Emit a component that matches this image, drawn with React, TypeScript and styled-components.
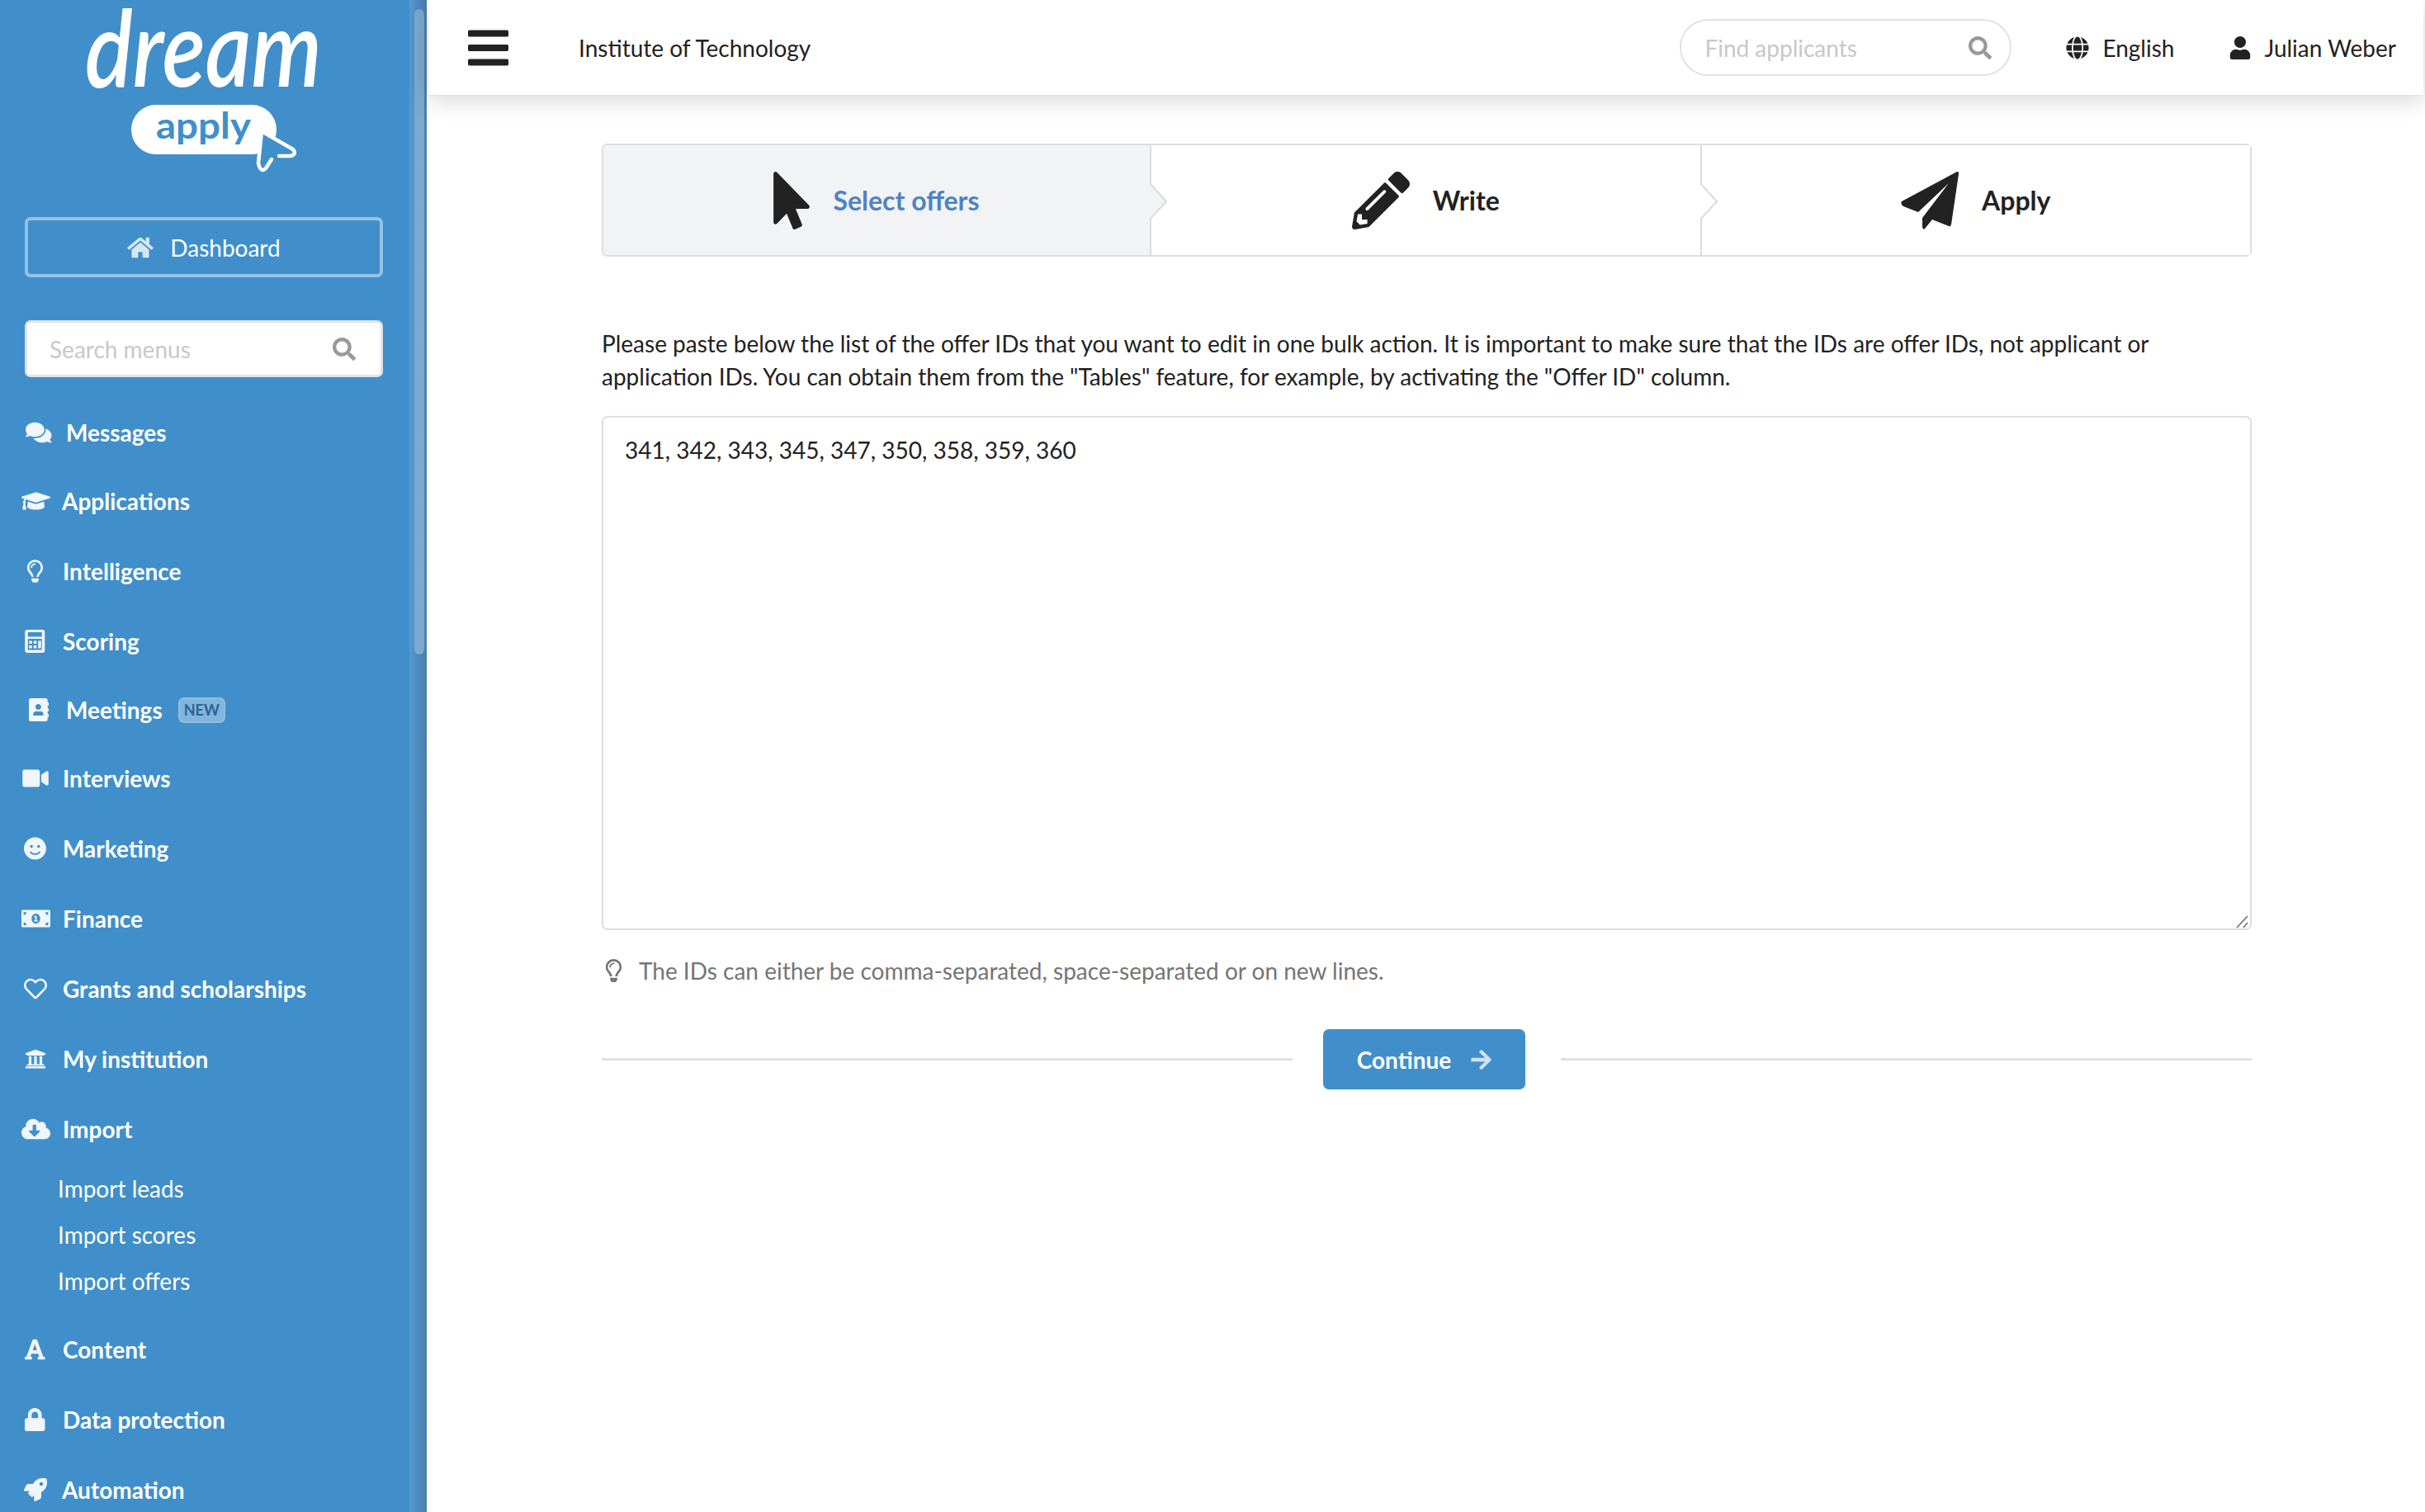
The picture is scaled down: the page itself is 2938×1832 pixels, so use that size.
import React from 'react';
import styled, { createGlobalStyle } from 'styled-components';
import {
  FaAddressBook,
  FaArrowRight,
  FaBars,
  FaCloudDownloadAlt,
  FaComments,
  FaFont,
  FaGlobe,
  FaGraduationCap,
  FaHome,
  FaLock,
  FaMoneyBillAlt,
  FaMousePointer,
  FaPencilAlt,
  FaRegHeart,
  FaRegLightbulb,
  FaRocket,
  FaSearch,
  FaSmile,
  FaUniversity,
  FaUser,
  FaVideo,
} from 'react-icons/fa';

const GlobalStyle = createGlobalStyle`
  html, body {
    margin: 0;
    height: 100%;
    overflow: hidden;
    background: #fff;
  }
  body {
    font-family: Lato, "Open Sans", sans-serif;
    font-size: 28px;
    color: #222;
    text-rendering: optimizeLegibility;
    -webkit-font-smoothing: antialiased;
  }
  * {
    box-sizing: border-box;
  }
`;

const Page = styled.div`
  display: flex;
  width: 100vw;
  height: 100vh;
  overflow: hidden;
`;

const Sidebar = styled.aside`
  display: flex;
  flex: 0 0 517px;
  min-width: 0;
  height: 100%;
  background: #408fcb;
  color: #fff;
`;

const SideContent = styled.div`
  flex: 1;
  min-width: 0;
`;

const ScrollTrack = styled.div`
  flex: 0 0 21px;
  padding: 11px 3px 0 6px;
  background: linear-gradient(90deg, #5a9ad0 0%, #4d8dc2 40%, #4a7fab 100%);
`;

const ScrollThumb = styled.div`
  height: 782px;
  border-radius: 6px;
  background: #7ba9cf;
`;

const LogoBox = styled.svg`
  display: block;
  width: 496px;
  height: 263px;
`;

const DashboardButton = styled.div`
  display: flex;
  align-items: center;
  justify-content: center;
  gap: 20px;
  height: 73px;
  margin: 0 32px 0 30px;
  border: 4px solid rgba(255, 255, 255, 0.45);
  border-radius: 7px;
  color: #fff;
`;

const HomeIcon = styled.span`
  display: flex;
  color: #d6e8f6;
  svg {
    width: 32px;
    height: 28px;
  }
`;

const MenuSearch = styled.div`
  display: flex;
  align-items: center;
  height: 69px;
  margin: 52px 32px 25px 30px;
  padding: 0 30px 0 27px;
  border: 3px solid #dfe3e6;
  border-radius: 7px;
  background: #fff;
`;

const SearchField = styled.input`
  flex: 1;
  width: 0;
  min-width: 0;
  border: 0;
  outline: 0;
  padding: 0;
  background: transparent;
  font: inherit;
  color: #222;
  &::placeholder {
    color: #c8c8c8;
    opacity: 1;
  }
`;

const SearchGlyph = styled.span`
  display: flex;
  color: #999;
  svg {
    width: 28px;
    height: 28px;
  }
`;

const NavList = styled.nav`
  display: flex;
  flex-direction: column;
`;

const NavRow = styled.div<{ $h: number; $x: number }>`
  display: flex;
  align-items: flex-start;
  height: ${({ $h }) => $h}px;
  padding-left: ${({ $x }) => $x}px;
  line-height: 84px;
  font-weight: 700;
`;

const NavIcon = styled.span<{ $w: number; $gap: number }>`
  display: flex;
  align-items: center;
  height: 84px;
  flex: 0 0 ${({ $w }) => $w}px;
  margin-right: ${({ $gap }) => $gap}px;
  color: rgba(255, 255, 255, 0.92);
  svg {
    width: ${({ $w }) => $w}px;
    height: 28px;
  }
`;

const NewBadge = styled.span`
  height: 31px;
  margin: 27px 0 0 19px;
  padding: 0 5px;
  border: 2px solid rgba(255, 255, 255, 0.12);
  border-radius: 7px;
  background: rgba(255, 255, 255, 0.34);
  color: #2f6292;
  font-size: 18px;
  font-weight: 700;
  line-height: 27px;
`;

const SubList = styled.div`
  display: flex;
  flex-direction: column;
  padding: 0 0 13px 70px;
`;

const SubItem = styled.div`
  height: 56px;
  line-height: 56px;
`;

const Main = styled.main`
  flex: 1;
  min-width: 0;
  display: flex;
  flex-direction: column;
`;

const TopBar = styled.header`
  display: flex;
  align-items: center;
  flex: 0 0 116px;
  margin: 0 2px;
  padding-left: 48px;
  background: #fff;
  border-bottom: 1px solid #e2e2e2;
  box-shadow: 0 6px 26px rgba(0, 0, 0, 0.16);
`;

const MenuButton = styled.span`
  display: flex;
  margin-right: 85px;
  svg {
    width: 49px;
    height: 56px;
  }
`;

const SchoolName = styled.div`
  flex: 1;
`;

const ApplicantSearch = styled.div`
  display: flex;
  align-items: center;
  width: 402px;
  height: 69px;
  margin-right: 66px;
  padding: 0 22px 0 28px;
  border: 2px solid #e2e2e2;
  border-radius: 35px;
`;

const TopLink = styled.div<{ $gap: number; $mr: number }>`
  display: flex;
  align-items: center;
  gap: ${({ $gap }) => $gap}px;
  margin-right: ${({ $mr }) => $mr}px;
  svg {
    display: block;
    width: 28px;
    height: 28px;
  }
`;

const Content = styled.div`
  padding: 58px 210px 0 212px;
`;

const Steps = styled.div`
  display: flex;
  height: 137px;
  border: 2px solid #dedede;
  border-radius: 7px;
`;

const Step = styled.div<{ $active?: boolean }>`
  position: relative;
  flex: ${({ $active }) => ($active ? '0 0 662px' : '1')};
  display: flex;
  align-items: center;
  justify-content: center;
  gap: 28px;
  background: ${({ $active }) => ($active ? '#f2f3f5' : '#fff')};
  color: ${({ $active }) => ($active ? '#4f83c2' : '#222')};
  font-size: 32px;
  font-weight: 700;
  border-radius: 5px 0 0 5px;
  & + & {
    border-left: 2px solid #dcdcdc;
    border-radius: 0;
  }
`;

const StepIcon = styled.span<{ $w: number }>`
  display: flex;
  color: #222;
  svg {
    display: block;
    width: ${({ $w }) => $w}px;
    height: 70px;
  }
`;

const StepNotch = styled.svg`
  position: absolute;
  top: 45px;
  right: -22px;
  z-index: 1;
  width: 22px;
  height: 46px;
`;

const Intro = styled.p`
  margin: 85px 0 28px;
  line-height: 40px;
`;

const TextBox = styled.div`
  position: relative;
  height: 623px;
`;

const IdsField = styled.textarea`
  display: block;
  width: 100%;
  height: 100%;
  padding: 19px 26px;
  border: 2px solid #dedede;
  border-radius: 7px;
  outline: 0;
  resize: none;
  font: inherit;
  line-height: 40px;
  color: #222;
`;

const ResizeGrip = styled.svg`
  position: absolute;
  right: 4px;
  bottom: 2px;
  width: 15px;
  height: 16px;
`;

const Hint = styled.div`
  display: flex;
  align-items: center;
  gap: 20px;
  margin-top: 29px;
  padding-left: 4px;
  line-height: 40px;
  color: #757575;
  svg {
    display: block;
    width: 21px;
    height: 28px;
  }
`;

const ActionRow = styled.div`
  display: flex;
  align-items: center;
  margin-top: 51px;
`;

const Rule = styled.div`
  flex: 1;
  height: 3px;
  background: #e0e2e2;
`;

const ContinueButton = styled.button`
  display: flex;
  align-items: center;
  justify-content: center;
  gap: 24px;
  flex: 0 0 245px;
  height: 73px;
  margin: 0 43px 0 37px;
  border: 0;
  border-radius: 7px;
  background: #408fcb;
  color: #fff;
  font: inherit;
  font-weight: 700;
  svg {
    width: 25px;
    height: 28px;
    color: #cfe3f4;
  }
`;

// the calculator in the menu is the outlined one, not the solid one from the icon set
const CalculatorIcon = () => (
  <svg viewBox="0 0 24 28" fill="currentColor">
    <path
      fillRule="evenodd"
      d="M3 0h18a3 3 0 0 1 3 3v22a3 3 0 0 1-3 3H3a3 3 0 0 1-3-3V3a3 3 0 0 1 3-3z M3.500 3v5.500h17V3z M3.500 11v13.500h17V11z"
    />
    <rect x="5" y="13.500" width="3.500" height="3.500" />
    <rect x="10.500" y="13.500" width="3.500" height="3.500" />
    <rect x="5" y="19" width="3.500" height="3.500" />
    <rect x="10.500" y="19" width="3.500" height="3.500" />
    <rect x="16" y="13.500" width="3.500" height="9" />
  </svg>
);

const navItems = [
  { label: 'Messages', icon: FaComments, x: 31, w: 31.5, textX: 80, h: 83 },
  { label: 'Applications', icon: FaGraduationCap, x: 26, w: 35, textX: 75, h: 85 },
  { label: 'Intelligence', icon: FaRegLightbulb, x: 33, w: 19, textX: 76, h: 85 },
  { label: 'Scoring', icon: CalculatorIcon, x: 30, w: 24.5, textX: 76, h: 83 },
  { label: 'Meetings', icon: FaAddressBook, x: 34.5, w: 24.5, textX: 80, h: 83, badge: 'NEW' },
  { label: 'Interviews', icon: FaVideo, x: 26.5, w: 32, textX: 76, h: 85 },
  { label: 'Marketing', icon: FaSmile, x: 29, w: 27, textX: 76, h: 85 },
  { label: 'Finance', icon: FaMoneyBillAlt, x: 26, w: 35, textX: 76, h: 85 },
  { label: 'Grants and scholarships', icon: FaRegHeart, x: 28.5, w: 28, textX: 76, h: 85 },
  { label: 'My institution', icon: FaUniversity, x: 29.5, w: 26, textX: 76, h: 85 },
  { label: 'Import', icon: FaCloudDownloadAlt, x: 26, w: 35, textX: 76, h: 86 },
];

const lowerItems = [
  { label: 'Content', icon: FaFont, x: 30, w: 24.5, textX: 76, h: 85 },
  { label: 'Data protection', icon: FaLock, x: 30, w: 24.5, textX: 76, h: 85 },
  { label: 'Automation', icon: FaRocket, x: 29, w: 28, textX: 75, h: 85 },
];

const renderRow = (item: (typeof navItems)[number]) => {
  const Icon = item.icon;
  return (
    <NavRow key={item.label} $h={item.h} $x={item.x}>
      <NavIcon $w={item.w} $gap={item.textX - item.x - item.w}>
        <Icon />
      </NavIcon>
      <span>{item.label}</span>
      {item.badge && <NewBadge>{item.badge}</NewBadge>}
    </NavRow>
  );
};

const Logo = () => (
  <LogoBox viewBox="0 0 496 263">
    <text
      x="103"
      y="105"
      fill="#fff"
      fontFamily="Lato, sans-serif"
      fontStyle="italic"
      fontWeight="600"
      fontSize="130"
      textLength="287"
      lengthAdjust="spacingAndGlyphs"
    >
      dream
    </text>
    <rect x="159" y="127" width="176" height="60" rx="30" fill="#fff" />
    <text
      x="189"
      y="168"
      fill="#408fcb"
      fontFamily="Lato, sans-serif"
      fontWeight="700"
      fontSize="44"
      textLength="115"
      lengthAdjust="spacingAndGlyphs"
    >
      apply
    </text>
    <path d="M316 158 L356 184 Q360 190 352 190 L338 190 L329 194 L321 205 Q316 210 312 202 Z" fill="#408fcb" />
    <path
      d="M338 189 L352 189 Q360 187 355 181 L317 159 L313 198 Q316 210 322 204 L329 193"
      fill="none"
      stroke="#fff"
      strokeWidth="4.5"
      strokeLinecap="round"
      strokeLinejoin="round"
    />
  </LogoBox>
);

export default function App() {
  return (
    <>
      <GlobalStyle />
      <Page>
        <Sidebar>
          <SideContent>
            <Logo />
            <DashboardButton>
              <HomeIcon>
                <FaHome />
              </HomeIcon>
              Dashboard
            </DashboardButton>
            <MenuSearch>
              <SearchField placeholder="Search menus" />
              <SearchGlyph>
                <FaSearch />
              </SearchGlyph>
            </MenuSearch>
            <NavList>
              {navItems.map(renderRow)}
              <SubList>
                <SubItem>Import leads</SubItem>
                <SubItem>Import scores</SubItem>
                <SubItem>Import offers</SubItem>
              </SubList>
              {lowerItems.map(renderRow)}
            </NavList>
          </SideContent>
          <ScrollTrack>
            <ScrollThumb />
          </ScrollTrack>
        </Sidebar>

        <Main>
          <TopBar>
            <MenuButton>
              <FaBars />
            </MenuButton>
            <SchoolName>Institute of Technology</SchoolName>
            <ApplicantSearch>
              <SearchField placeholder="Find applicants" />
              <SearchGlyph>
                <FaSearch />
              </SearchGlyph>
            </ApplicantSearch>
            <TopLink $gap={16} $mr={66}>
              <FaGlobe />
              English
            </TopLink>
            <TopLink $gap={15} $mr={33}>
              <FaUser />
              Julian Weber
            </TopLink>
          </TopBar>

          <Content>
            <Steps>
              <Step $active>
                <StepIcon $w={44}>
                  <FaMousePointer />
                </StepIcon>
                Select offers
                <StepNotch viewBox="0 0 22 46">
                  <polygon points="0,1 20,23 0,45" fill="#f2f3f5" />
                  <polyline points="0,1 20,23 0,45" fill="none" stroke="#dcdcdc" strokeWidth="2" />
                </StepNotch>
              </Step>
              <Step>
                <StepIcon $w={70}>
                  <FaPencilAlt />
                </StepIcon>
                Write
                <StepNotch viewBox="0 0 22 46">
                  <polygon points="0,1 20,23 0,45" fill="#fff" />
                  <polyline points="0,1 20,23 0,45" fill="none" stroke="#dcdcdc" strokeWidth="2" />
                </StepNotch>
              </Step>
              <Step>
                <StepIcon $w={70}>
                  <svg viewBox="0 0 70 70" fill="currentColor">
                    <path d="M68 0 L1 36 Q-1 39 3 42 L21 49 L58 14 L26 56 L26 67 Q27 71 29 69 L38 58 L58 66 Q60 67 61 64 L70 3 Q70 -1 68 0 Z" />
                  </svg>
                </StepIcon>
                Apply
              </Step>
            </Steps>

            <Intro>
              Please paste below the list of the offer IDs that you want to edit in one bulk action. It is important to make sure that the IDs are offer IDs, not applicant or
              <br />
              application IDs. You can obtain them from the "Tables" feature, for example, by activating the "Offer ID" column.
            </Intro>

            <TextBox>
              <IdsField defaultValue="341, 342, 343, 345, 347, 350, 358, 359, 360" />
              <ResizeGrip viewBox="0 0 15 16">
                <path d="M1 15 L14 1 M9 15 L14 9" stroke="#6f6f6f" strokeWidth="1.6" fill="none" />
              </ResizeGrip>
            </TextBox>

            <Hint>
              <FaRegLightbulb />
              The IDs can either be comma-separated, space-separated or on new lines.
            </Hint>

            <ActionRow>
              <Rule />
              <ContinueButton>
                Continue
                <FaArrowRight />
              </ContinueButton>
              <Rule />
            </ActionRow>
          </Content>
        </Main>
      </Page>
    </>
  );
}
